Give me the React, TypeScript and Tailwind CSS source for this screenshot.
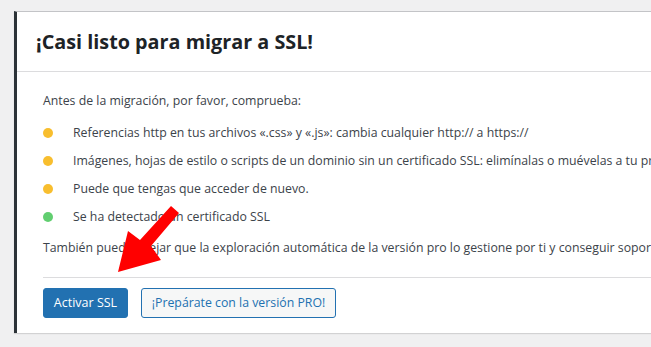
import React from "react";

const items: { color: string; text: string }[] = [
  { color: "bg-[#f8be2e]", text: "Referencias http en tus archivos «.css» y «.js»: cambia cualquier http:// a https://" },
  { color: "bg-[#f8be2e]", text: "Imágenes, hojas de estilo o scripts de un dominio sin un certificado SSL: elimínalas o muévelas a tu propio servidor." },
  { color: "bg-[#f8be2e]", text: "Puede que tengas que acceder de nuevo." },
  { color: "bg-[#61ce70]", text: "Se ha detectado un certificado SSL" },
];

export default function App() {
  return (
    <div
      className="relative w-[651px] h-[347px] overflow-hidden bg-[#f0f0f1] pt-[11px] pl-[14px]"
      style={{ fontFamily: '"Open Sans", "Noto Sans", sans-serif' }}
    >
      <div className="w-[700px] bg-white border-l-[3px] border-l-[#2c3338] border-t border-t-[#c3c4c7] shadow-[0_1px_1px_rgba(0,0,0,0.12)]">
        <div className="h-[60px] flex items-center pl-[19px] border-b border-b-[#dcdcde]">
          <h1 className="text-[19.8px] font-bold text-[#1d2327] whitespace-nowrap">¡Casi listo para migrar a SSL!</h1>
        </div>
        <div className="pl-[26px] text-[12.3px] text-[#3c434a] whitespace-nowrap">
          <div className="h-[47px] flex items-center pt-[11px]">Antes de la migración, por favor, comprueba:</div>
          <ul className="flex flex-col">
            {items.map((it, i) => (
              <li key={i} className="h-[28px] flex items-center">
                <span className={`w-[10px] h-[10px] rounded-full ${it.color} mr-[20px] shrink-0`} />
                <span>{it.text}</span>
              </li>
            ))}
          </ul>
          <div className="h-[34px] flex items-center">
            También puedes dejar que la exploración automática de la versión pro lo gestione por ti y conseguir soporte premium, funciones adicionales y mucho más.
          </div>
          <div className="border-b border-b-[#dcdcde] mt-[12px]" />
          <div className="flex gap-[13px] pt-[10px] pb-[15px]">
            <button className="w-[85px] h-[30px] rounded-[3px] bg-[#2271b1] text-white text-[12.5px] border border-[#2271b1] flex items-center justify-center">
              Activar SSL
            </button>
            <button className="w-[195px] h-[30px] rounded-[3px] bg-[#f6f7f7] text-[#2271b1] text-[12.3px] border border-[#2271b1] flex items-center justify-center">
              ¡Prepárate con la versión PRO!
            </button>
          </div>
        </div>
      </div>
      <svg className="absolute left-0 top-0 pointer-events-none" width="651" height="347" viewBox="0 0 651 347">
        <polygon
          points="171,206 179,213 151,246 161,260 118,272 128,231 140,240"
          fill="#ff0000"
        />
      </svg>
    </div>
  );
}
